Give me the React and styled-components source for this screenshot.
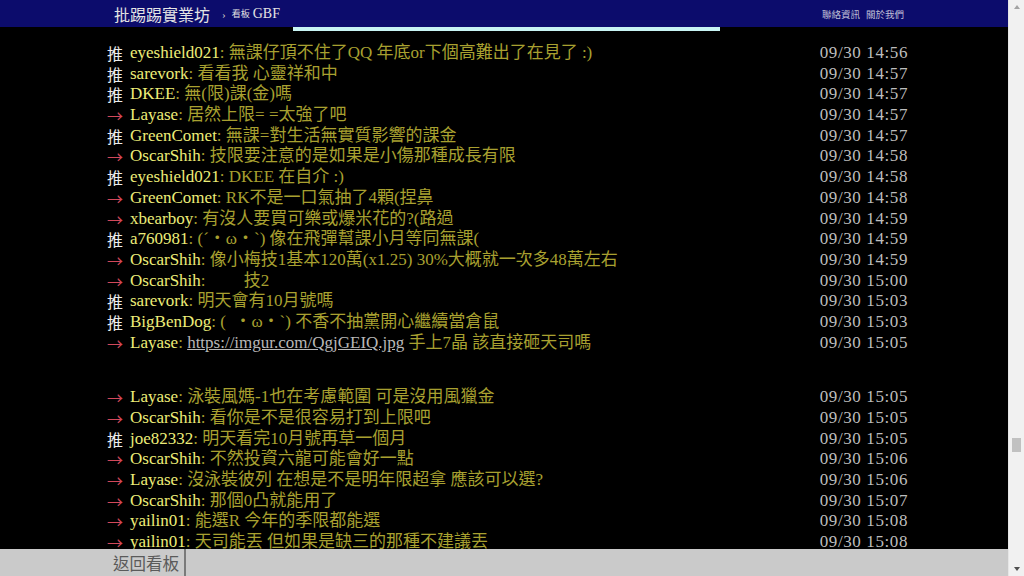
import React from "react";
import styled, { createGlobalStyle } from "styled-components";

const pushes = [
  { tag: "推", user: "eyeshield021", text: "無課仔頂不住了QQ 年底or下個高難出了在見了 :)", time: "09/30 14:56" },
  { tag: "推", user: "sarevork", text: "看看我 心靈祥和中", time: "09/30 14:57" },
  { tag: "推", user: "DKEE", text: "無(限)課(金)嗎", time: "09/30 14:57" },
  { tag: "→", user: "Layase", text: "居然上限= =太強了吧", time: "09/30 14:57" },
  { tag: "推", user: "GreenComet", text: "無課=對生活無實質影響的課金", time: "09/30 14:57" },
  { tag: "→", user: "OscarShih", text: "技限要注意的是如果是小傷那種成長有限", time: "09/30 14:58" },
  { tag: "推", user: "eyeshield021", text: "DKEE 在自介 :)", time: "09/30 14:58" },
  { tag: "→", user: "GreenComet", text: "RK不是一口氣抽了4顆(捏鼻", time: "09/30 14:58" },
  { tag: "→", user: "xbearboy", text: "有沒人要買可樂或爆米花的?(路過", time: "09/30 14:59" },
  { tag: "推", user: "a760981", text: "(ˊ・ω・ˋ) 像在飛彈幫課小月等同無課(", time: "09/30 14:59" },
  { tag: "→", user: "OscarShih", text: "像小梅技1基本120萬(x1.25) 30%大概就一次多48萬左右", time: "09/30 14:59" },
  { tag: "→", user: "OscarShih", text: "        技2", time: "09/30 15:00" },
  { tag: "推", user: "sarevork", text: "明天會有10月號嗎", time: "09/30 15:03" },
  { tag: "推", user: "BigBenDog", text: "(  ‧ω‧ˋ) 不香不抽黨開心繼續當倉鼠", time: "09/30 15:03" },
  {
    tag: "→",
    user: "Layase",
    link: "https://imgur.com/QgjGEIQ.jpg",
    text: " 手上7晶 該直接砸天司嗎",
    time: "09/30 15:05",
    gapAfter: true
  },
  { tag: "→", user: "Layase", text: "泳裝風媽-1也在考慮範圍 可是沒用風獵金", time: "09/30 15:05" },
  { tag: "→", user: "OscarShih", text: "看你是不是很容易打到上限吧", time: "09/30 15:05" },
  { tag: "推", user: "joe82332", text: "明天看完10月號再草一個月", time: "09/30 15:05" },
  { tag: "→", user: "OscarShih", text: "不然投資六龍可能會好一點", time: "09/30 15:06" },
  { tag: "→", user: "Layase", text: "沒泳裝彼列 在想是不是明年限超拿 應該可以選?", time: "09/30 15:06" },
  { tag: "→", user: "OscarShih", text: "那個0凸就能用了", time: "09/30 15:07" },
  { tag: "→", user: "yailin01", text: "能選R 今年的季限都能選", time: "09/30 15:08" },
  { tag: "→", user: "yailin01", text: "天司能丟 但如果是缺三的那種不建議丟", time: "09/30 15:08" }
];

export default function App() {
  return (
    <>
      <GlobalStyle />
      <Shell>
        <Page>
          <TopBar>
            <TopInner>
              <SiteTitle>批踢踢實業坊</SiteTitle>
              <Crumb>›</Crumb>
              <BoardLabel>看板</BoardLabel>
              <BoardName>GBF</BoardName>
              <TopLinks>
                <TopLink>聯絡資訊</TopLink>
                <TopLink>關於我們</TopLink>
              </TopLinks>
            </TopInner>
          </TopBar>
          <Main>
            <Container>
              <HighlightBar />
              {pushes.map((p, i) => (
                <React.Fragment key={i}>
                  <PushRow>
                    <PushTag arrow={p.tag === "→"}>{p.tag}</PushTag>
                    <PushUser>{p.user}</PushUser>
                    <PushContent>
                      {": "}
                      {p.link && <PushLink>{p.link}</PushLink>}
                      {p.text}
                    </PushContent>
                    <PushTime>{p.time}</PushTime>
                  </PushRow>
                  {p.gapAfter && <RichGap />}
                </React.Fragment>
              ))}
            </Container>
          </Main>
          <Footer>
            <FooterInner>
              <BackButton>返回看板</BackButton>
            </FooterInner>
          </Footer>
        </Page>
        <ScrollBar>
          <ArrowUp />
          <Track>
            <Thumb />
          </Track>
          <ArrowDown />
        </ScrollBar>
      </Shell>
    </>
  );
}

const GlobalStyle = createGlobalStyle`
  html, body {
    margin: 0;
    padding: 0;
    height: 100%;
    overflow: hidden;
    background: #000000;
  }
  body {
    font-family: "Liberation Serif", "Noto Sans CJK TC", serif;
  }
`;

const Shell = styled.div`
  display: flex;
  width: 100vw;
  height: 100vh;
`;

const Page = styled.div`
  flex: 1;
  min-width: 0;
  display: flex;
  flex-direction: column;
`;

const TopBar = styled.div`
  flex: none;
  height: 27px;
  background: #0c0c6c;
`;

const TopInner = styled.div`
  max-width: 800px;
  height: 100%;
  margin: 0 auto;
  padding: 0 0 0 10px;
  box-sizing: border-box;
  display: flex;
  align-items: center;
`;

const SiteTitle = styled.span`
  font-size: 16px;
  color: #e4e4e4;
`;

const Crumb = styled.span`
  margin: 0 6px 0 12px;
  font-size: 11px;
  color: #c8c8c8;
`;

const BoardLabel = styled.span`
  font-size: 9px;
  color: #e0e0e0;
  margin-right: 3px;
`;

const BoardName = styled.span`
  font-size: 14px;
  color: #e4e4e4;
`;

const TopLinks = styled.div`
  margin-left: auto;
  display: flex;
  gap: 6px;
`;

const TopLink = styled.span`
  font-size: 9.5px;
  color: #c0c0d8;
`;

const Main = styled.div`
  flex: 1;
  overflow: hidden;
  background: #000000;
`;

const Container = styled.div`
  width: 800px;
  margin: 0 auto;
  padding-left: 3px;
  padding-top: 1px;
  box-sizing: border-box;
`;

const HighlightBar = styled.div`
  width: 427px;
  height: 4px;
  margin: -1px 0 12px 186px;
  background: #c8f4f4;
`;

const PushRow = styled.div`
  display: flex;
  height: 20.7px;
  line-height: 20.7px;
  font-size: 17px;
  white-space: pre;
`;

const PushTag = styled.span`
  width: 23px;
  flex: none;
  font-family: "Noto Sans CJK TC", sans-serif;
  font-size: 16px;
  color: ${(p) => (p.arrow ? "#d2485a" : "#ececec")};
`;

const PushUser = styled.span`
  color: #eded78;
`;

const PushContent = styled.span`
  color: #a8a030;
`;

const PushLink = styled.span`
  color: #b8b8b8;
  text-decoration: underline;
`;

const PushTime = styled.span`
  margin-left: auto;
  margin-right: -4px;
  color: #bdbdbd;
  letter-spacing: 0.6px;
`;

const RichGap = styled.div`
  height: 34px;
`;

const Footer = styled.div`
  flex: none;
  height: 27px;
  background: #cacaca;
`;

const FooterInner = styled.div`
  width: 800px;
  height: 100%;
  margin: 0 auto;
  display: flex;
`;

const BackButton = styled.div`
  display: flex;
  align-items: center;
  padding: 0 5px 0 9px;
  font-size: 16.5px;
  font-family: "Noto Sans CJK TC", sans-serif;
  color: #5a5a5a;
  border-right: 2px solid #7a7a7a;
`;

const ScrollBar = styled.div`
  flex: none;
  width: 16px;
  height: 100%;
  display: flex;
  flex-direction: column;
  align-items: center;
  background: #f1f1f1;
  border-left: 1px solid #e6e6e6;
  box-sizing: border-box;
`;

const ArrowUp = styled.div`
  flex: none;
  margin: 5px 0 6px;
  width: 0;
  height: 0;
  border-left: 3.5px solid transparent;
  border-right: 3.5px solid transparent;
  border-bottom: 4px solid #a3a3a3;
`;

const ArrowDown = styled.div`
  flex: none;
  margin: 6px 0 5px;
  width: 0;
  height: 0;
  border-left: 3.5px solid transparent;
  border-right: 3.5px solid transparent;
  border-top: 4px solid #505050;
`;

const Track = styled.div`
  flex: 1;
  width: 100%;
  display: flex;
  flex-direction: column;
  align-items: center;
`;

const Thumb = styled.div`
  margin-top: 423px;
  width: 9px;
  height: 14px;
  background: #c1c1c1;
`;
